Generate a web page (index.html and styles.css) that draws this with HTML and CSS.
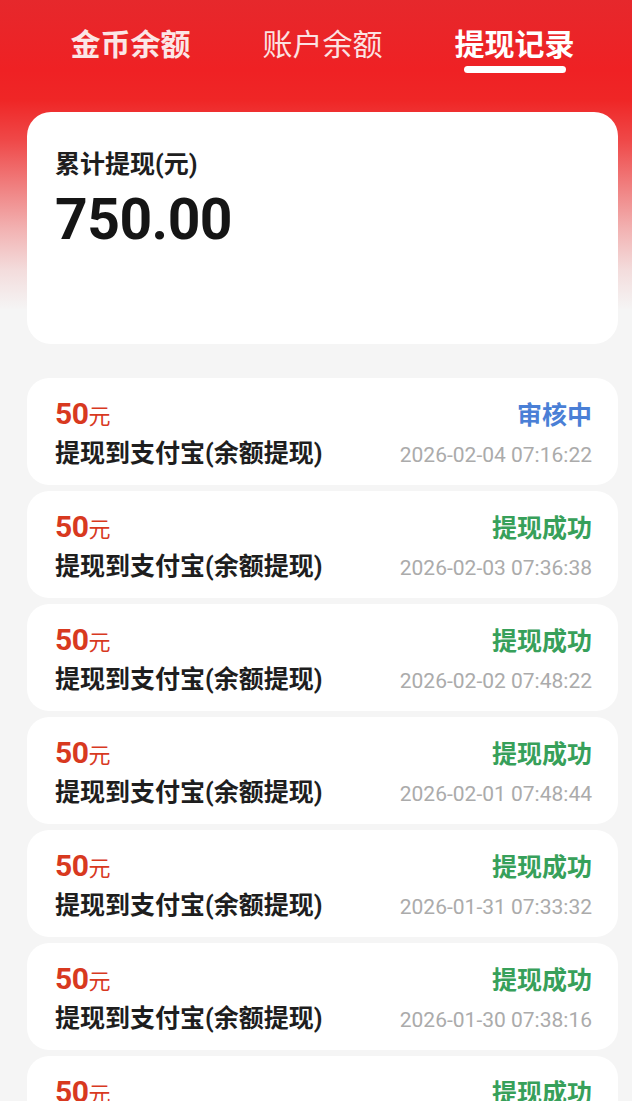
FILE: index.html
```html
<!DOCTYPE html>
<html lang="zh-CN">
<head>
<meta charset="utf-8">
<title>提现记录</title>
<link rel="stylesheet" href="styles.css">
</head>
<body>
<div class="page">
  <nav class="tabs">
    <div class="tab tab-bold">金币余额</div>
    <div class="tab">账户余额</div>
    <div class="tab tab-active">提现记录</div>
  </nav>

  <section class="summary">
    <div class="summary-label">累计提现(元)</div>
    <div class="summary-value">750.00</div>
  </section>

  <ul class="records">
    <li class="record">
      <div class="row">
        <span class="amount"><b>50</b>元</span>
        <span class="status pending">审核中</span>
      </div>
      <div class="row">
        <span class="desc">提现到支付宝(余额提现)</span>
        <span class="time">2026-02-04 07:16:22</span>
      </div>
    </li>
    <li class="record">
      <div class="row">
        <span class="amount"><b>50</b>元</span>
        <span class="status done">提现成功</span>
      </div>
      <div class="row">
        <span class="desc">提现到支付宝(余额提现)</span>
        <span class="time">2026-02-03 07:36:38</span>
      </div>
    </li>
    <li class="record">
      <div class="row">
        <span class="amount"><b>50</b>元</span>
        <span class="status done">提现成功</span>
      </div>
      <div class="row">
        <span class="desc">提现到支付宝(余额提现)</span>
        <span class="time">2026-02-02 07:48:22</span>
      </div>
    </li>
    <li class="record">
      <div class="row">
        <span class="amount"><b>50</b>元</span>
        <span class="status done">提现成功</span>
      </div>
      <div class="row">
        <span class="desc">提现到支付宝(余额提现)</span>
        <span class="time">2026-02-01 07:48:44</span>
      </div>
    </li>
    <li class="record">
      <div class="row">
        <span class="amount"><b>50</b>元</span>
        <span class="status done">提现成功</span>
      </div>
      <div class="row">
        <span class="desc">提现到支付宝(余额提现)</span>
        <span class="time">2026-01-31 07:33:32</span>
      </div>
    </li>
    <li class="record">
      <div class="row">
        <span class="amount"><b>50</b>元</span>
        <span class="status done">提现成功</span>
      </div>
      <div class="row">
        <span class="desc">提现到支付宝(余额提现)</span>
        <span class="time">2026-01-30 07:38:16</span>
      </div>
    </li>
    <li class="record">
      <div class="row">
        <span class="amount"><b>50</b>元</span>
        <span class="status done">提现成功</span>
      </div>
      <div class="row">
        <span class="desc">提现到支付宝(余额提现)</span>
        <span class="time">2026-01-29 07:30:10</span>
      </div>
    </li>
  </ul>
</div>
</body>
</html>
```

FILE: styles.css
```css
* { box-sizing: border-box; }

html, body {
  margin: 0;
  padding: 0;
  height: 1101px;
  overflow: hidden;
}

body {
  background: #f5f5f5;
  font-family: Roboto, "Noto Sans CJK SC", sans-serif;
  color: #1e1e1e;
}

.page {
  padding: 0 14px 0 27px;
  background:
    linear-gradient(to bottom,
      #e6282c 0px,
      #ef2124 70px,
      #ef2626 100px,
      #ef4848 140px,
      #f08484 190px,
      #f2b3b3 230px,
      #f3dcdc 270px,
      #f5f5f5 310px) no-repeat top left / 100% 320px,
    #f5f5f5;
}

.tabs {
  display: flex;
  justify-content: center;
  gap: 72px;
  padding-top: 24px;
  height: 112px;
}

.tab {
  position: relative;
  font-family: "Noto Sans CJK SC", sans-serif;
  font-size: 30px;
  line-height: 36px;
  height: 36px;
  color: #fbe2e2;
  font-weight: 400;
}

.tab-bold {
  font-weight: 700;
  color: #fbe6e6;
}

.tab-active {
  font-weight: 700;
  color: #fff;
}

.tab-active::after {
  content: "";
  position: absolute;
  left: 50%;
  top: 42px;
  width: 102px;
  height: 7px;
  margin-left: -51px;
  border-radius: 4px;
  background: #fff;
}

.summary {
  background: #fff;
  border-radius: 24px;
  height: 232px;
  padding: 37px 28px 0;
}

.summary-label {
  font-family: Roboto, "Noto Sans CJK SC", sans-serif;
  font-size: 25px;
  line-height: 32px;
  font-weight: 700;
  color: #1e1e1e;
}

.summary-value {
  margin-top: 9px;
  font-family: Roboto, sans-serif;
  font-size: 57px;
  line-height: 60px;
  font-weight: 700;
  color: #151515;
  letter-spacing: -0.5px;
}

.records {
  list-style: none;
  margin: 34px 0 0;
  padding: 0;
  display: flex;
  flex-direction: column;
  gap: 6px;
}

.record {
  background: #fff;
  border-radius: 22px;
  height: 107px;
  padding: 18px 26px 0 28px;
}

.row {
  display: flex;
  justify-content: space-between;
  align-items: baseline;
}

.row + .row {
  margin-top: 7px;
}

.amount {
  color: #d8391f;
  font-family: "Noto Sans CJK SC", sans-serif;
  font-size: 22px;
  line-height: 34px;
}

.amount b {
  font-family: Roboto, sans-serif;
  font-size: 30px;
  font-weight: 700;
  letter-spacing: -0.5px;
}

.status {
  font-family: "Noto Sans CJK SC", sans-serif;
  font-size: 25px;
  line-height: 34px;
  font-weight: 700;
}

.pending { color: #4a7fd6; }
.done { color: #37a05a; }

.desc {
  font-family: Roboto, "Noto Sans CJK SC", sans-serif;
  font-size: 25px;
  line-height: 32px;
  font-weight: 700;
  color: #1e1e1e;
}

.time {
  font-family: Roboto, sans-serif;
  font-size: 21px;
  line-height: 32px;
  color: #ababab;
}
```
